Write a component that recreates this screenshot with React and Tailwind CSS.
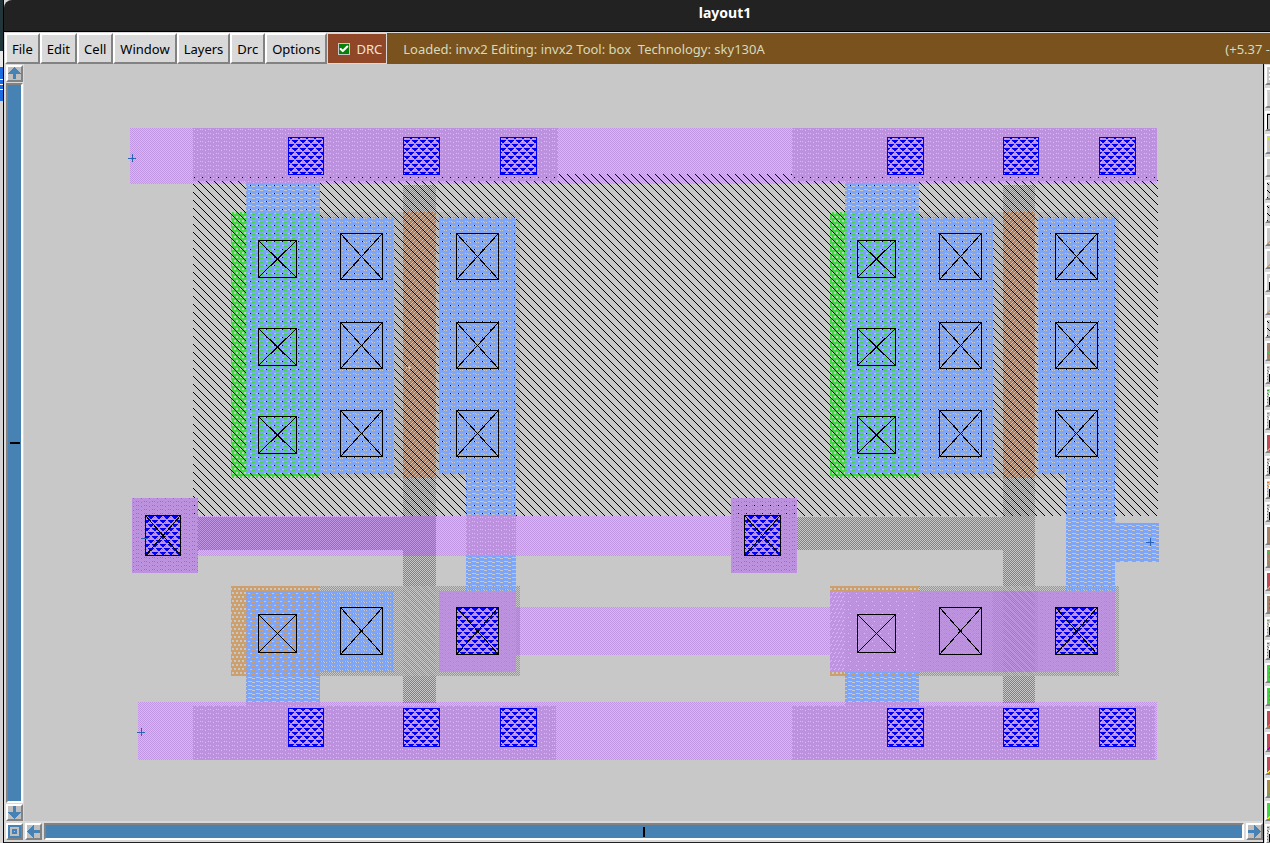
import React from "react";
import { Check } from "lucide-react";

const STIPPLES = [
  { id: "nwell", color: "#000000", rows: [".#......", "..#.....", "...#....", "....#...", ".....#..", "......#.", ".......#", "#......."] },
  { id: "poly", color: "#dc5a5a", rows: [".#", "#."] },
  { id: "ndiff", color: "#42d242", rows: [".#", "#."] },
  { id: "pdiff", color: "#cd9f6c", rows: [".#", "#."] },
  { id: "ntie", color: "#42d642", rows: ["..##", "..##", "####", "####", "##..", "##..", "####", "####"] },
  { id: "ptie", color: "#cd9f6c", rows: ["..##", "..##", "####", "####", "##..", "##..", "####", "####"] },
  { id: "pfet", color: "#c88a5c", rows: ["#...", "...#", "..#.", ".#.."] },
  { id: "nfetBase", color: "#b4825a", rows: [".#", "#."] },
  { id: "nfet", color: "#55d255", rows: [".#......", "..#.....", "...#....", "....#...", ".....#..", "......#.", ".......#", "#......."] },
  { id: "metal1", color: "#7da5fa", rows: ["########", "....####", "####...#", "########"] },
  { id: "metal2", color: "#c096e2", rows: ["#.", ".#"] },
  { id: "via", color: "#0000f5", rows: ["######..", ".####...", "..##....", "........", "##..####", "#....###", "......##", "........"] },
];

// Mask layers in drawing order: [stipple, x1, y1, x2, y2]
const SHAPES = [
  ["poly", 403, 185, 436, 703],
  ["poly", 198, 517, 403, 550],
  ["poly", 132, 498, 198, 573],
  ["poly", 1003, 185, 1035, 703],
  ["poly", 797, 517, 1003, 550],
  ["poly", 731, 498, 797, 573],
  ["ntie", 231, 212, 320, 478],
  ["pdiff", 320, 212, 520, 478],
  ["poly", 403, 212, 436, 478],
  ["pfet", 403, 212, 436, 478],
  ["ntie", 830, 212, 919, 478],
  ["pdiff", 919, 212, 1119, 478],
  ["poly", 1003, 212, 1035, 478],
  ["pfet", 1003, 212, 1035, 478],
  ["ptie", 231, 586, 320, 676],
  ["ndiff", 320, 586, 520, 676],
  ["nfetBase", 403, 586, 436, 676],
  ["nfet", 403, 586, 436, 676],
  ["ptie", 830, 586, 919, 676],
  ["ndiff", 919, 586, 1119, 676],
  ["nfetBase", 1003, 586, 1035, 676],
  ["nfet", 1003, 586, 1035, 676],
  ["nwell", 193, 174, 1158, 516],
  ["metal1", 193, 128, 558, 181],
  ["metal1", 792, 128, 1157, 181],
  ["metal1", 246, 181, 320, 474],
  ["metal1", 320, 217, 394, 474],
  ["metal1", 439, 217, 516, 474],
  ["metal1", 466, 474, 516, 591],
  ["metal1", 845, 181, 919, 474],
  ["metal1", 919, 217, 993, 474],
  ["metal1", 1038, 217, 1115, 474],
  ["metal1", 1066, 474, 1115, 591],
  ["metal1", 1115, 523, 1159, 562],
  ["metal1", 132, 498, 198, 573],
  ["metal1", 731, 498, 797, 573],
  ["metal1", 246, 591, 320, 706],
  ["metal1", 320, 591, 394, 672],
  ["metal1", 439, 591, 516, 672],
  ["metal1", 845, 591, 919, 706],
  ["metal1", 919, 591, 993, 672],
  ["metal1", 1038, 591, 1115, 672],
  ["metal1", 193, 706, 556, 760],
  ["metal1", 792, 706, 1155, 760],
  ["metal2", 130, 128, 1157, 184],
  ["metal2", 132, 498, 198, 573],
  ["metal2", 198, 516, 731, 556],
  ["metal2", 731, 498, 797, 573],
  ["metal2", 439, 591, 516, 672],
  ["metal2", 516, 607, 830, 655],
  ["metal2", 830, 591, 1115, 672],
  ["metal2", 138, 702, 1157, 760],
];

const RAIL_VIAS = [[288, 36], [403, 37], [500, 37], [887, 37], [1003, 36], [1099, 37]].flatMap(([x, w]) => [
  [x, 137, w, 37],
  [x, 708, w, 38],
]);

const SMALL_CUTS = [258, 857].flatMap((x) => [240, 328, 416, 614].map((y) => [x, y, 38, y === 614 ? 38 : 37]));
const TALL_CUTS = [340, 456, 939, 1055].flatMap((x) => [233, 322, 410].map((y) => [x, y, 42, 46]));
const CUTS = [...SMALL_CUTS, ...TALL_CUTS, [340, 607, 42, 47], [939, 607, 42, 47]];
const VIA_CUTS = [
  [456, 607, 42, 47],
  [1055, 607, 42, 47],
  [145, 515, 35, 40],
  [744, 515, 36, 40],
];

function Stipple({ id, color, rows }) {
  const w = rows[0].length;
  const cells = [];
  rows.forEach((row, y) => {
    for (let x = 0; x < w; x++) {
      if (row[x] === "#") cells.push(<rect key={`${x}-${y}`} x={x} y={y} width="1" height="1" />);
    }
  });
  return (
    <pattern id={id} width={w} height={rows.length} patternUnits="userSpaceOnUse" fill={color}>
      {cells}
    </pattern>
  );
}

function Cut({ box: [x, y, w, h] }) {
  return (
    <path
      d={`M${x + 0.5} ${y + 0.5}h${w}v${h}h${-w}zl${w} ${h}M${x + w + 0.5} ${y + 0.5}l${-w} ${h}`}
      fill="none"
      stroke="#000"
    />
  );
}

function Plus({ x, y, color = "#2a62b4" }) {
  return <path d={`M${x - 4} ${y + 0.5}h8M${x + 0.5} ${y - 4}v8`} stroke={color} />;
}

function LayoutCanvas() {
  return (
    <svg className="block h-full w-full" shapeRendering="crispEdges" role="img" aria-label="invx2">
      <defs>
        {STIPPLES.map((s) => (
          <Stipple key={s.id} {...s} />
        ))}
      </defs>
      <g transform="translate(-24 -64)">
        {SHAPES.map(([id, x1, y1, x2, y2], i) => (
          <rect key={i} x={x1} y={y1} width={x2 - x1} height={y2 - y1} fill={`url(#${id})`} />
        ))}
        {RAIL_VIAS.map(([x, y, w, h]) => (
          <rect key={`${x}-${y}`} x={x + 0.5} y={y + 0.5} width={w - 1} height={h} fill="url(#via)" stroke="#0000f5" />
        ))}
        {VIA_CUTS.map(([x, y, w, h]) => (
          <rect key={`${x}-${y}`} x={x} y={y} width={w} height={h} fill="url(#via)" />
        ))}
        {[...CUTS, ...VIA_CUTS].map((box) => (
          <Cut key={box.join("-")} box={box} />
        ))}
        <Plus x={132} y={158} />
        <Plus x={141} y={732} />
        <Plus x={1150} y={542} />
        <path d="M141 538.5h7" stroke="#2a62b4" />
        <path d="M409 365.5v5M406 367.5h6" stroke="#d8b8a0" />
      </g>
    </svg>
  );
}

const MENUS = ["File", "Edit", "Cell", "Window", "Layers", "Drc", "Options"];

function MenuBar() {
  return (
    <header className="flex h-8 shrink-0 items-stretch border-t border-[#d9d9d9] bg-[#7a521e] text-[13px]">
      <nav className="flex bg-[#d9d9d9] pl-px text-black">
        {MENUS.map((m) => (
          <button
            key={m}
            className="border-2 border-t-white border-l-white border-r-[#828282] border-b-[#828282] bg-[#d9d9d9] px-[5px] pt-0.5 leading-none whitespace-nowrap"
          >
            {m}
          </button>
        ))}
      </nav>
      <label className="flex items-center gap-1.5 border border-[#d9d9d9] bg-[#8f4728] pr-1 pl-2.5 text-[#f3e3d8]">
        <span className="relative flex size-3 items-center justify-center">
          <input
            type="checkbox"
            defaultChecked
            className="size-3 appearance-none border border-[#c8c8c8] bg-[#078007]"
          />
          <Check className="pointer-events-none absolute size-2.5 text-white" strokeWidth={5} />
        </span>
        <span className="pt-0.5">DRC</span>
      </label>
      <div className="flex min-w-0 flex-1 items-center justify-between overflow-hidden pt-0.5 pl-4 whitespace-pre text-[#d6dabc]">
        <span>Loaded: invx2 Editing: invx2 Tool: box  Technology: sky130A</span>
        <span className="shrink-0">(+5.37 -</span>
      </div>
    </header>
  );
}

const ARROWS = {
  up: "M6.5 0L13 6v1H8v5H5V7H0V6z",
  down: "M6.5 13L0 7V6h5V0h3v6h5v1z",
  left: "M0 6.5L6 0h1v5h6v3H7v5H6z",
  right: "M13 6.5L7 0H6v5H0v3h6v5h1z",
};

function ScrollButton({ dir, label }) {
  return (
    <button
      aria-label={label}
      className="flex size-[17px] shrink-0 items-center justify-center border-2 border-t-white border-l-white border-r-[#828282] border-b-[#828282] bg-[#bfbfbf]"
    >
      <svg width="13" height="13" viewBox="0 0 13 13" className="shrink-0" shapeRendering="crispEdges">
        {dir === "zoom" ? (
          <path d="M1 1h11v11h-11zM5 5h3v3h-3z" fill="none" stroke="#4682b4" strokeWidth="2" />
        ) : (
          <path d={ARROWS[dir]} fill="#4682b4" />
        )}
      </svg>
    </button>
  );
}

function Thumb({ vertical }) {
  return (
    <div className="flex min-h-0 min-w-0 flex-1 items-center justify-center border-2 border-t-[#828282] border-l-[#828282] border-r-white border-b-white bg-[#4682b4]">
      <div className={vertical ? "h-0.5 w-2.5 bg-black" : "h-2.5 w-0.5 bg-black"} />
    </div>
  );
}

const SWATCHES = [
  ["#c8c8c8", "#ffffff", "dots"], ["#c8c8c8", "#f0f000", "box"], ["#c8c8c8", "#000000", "box"],
  ["#c8c8c8", "#e6e600", "hatch"], ["#c8c8c8", "#c8c8c8", "none"], ["#c8c8c8", "#000000", "hatch"],
  ["#c8c8c8", "#000000", "hatch"], ["#c8c8c8", "#cd9f6c", "slash"], ["#c8c8c8", "#cd9f6c", "slash"],
  ["#c8c8c8", "#e6e600", "cut"], ["#c8c8c8", "#cd9f6c", "slash"], ["#c8c8c8", "#000000", "hatch"],
  ["#a5826a", "#42d242", "hatch"], ["#c8c8c8", "#42a242", "cut"], ["#c8c8c8", "#42a242", "cut"],
  ["#c8c8c8", "#829a62", "cut"], ["#be4b55", "#d8a080", "slash"], ["#c8c8c8", "#be4b55", "cut"],
  ["#c8c8c8", "#d08030", "cut"], ["#c8c8c8", "#be4b55", "cut"], ["#a5826a", "#a5826a", "none"],
  ["#a5826a", "#42d242", "hatch"], ["#be4b55", "#d8a080", "slash"], ["#a5826a", "#be4b55", "dots"],
  ["#c8c8c8", "#829a62", "cut"], ["#c8c8c8", "#be4b55", "cut"], ["#42d642", "#dc5a5a", "dots"],
  ["#42d642", "#dc5a5a", "dots"], ["#be4b55", "#d08030", "slash"], ["#be4b55", "#b400a0", "slash"],
  ["#be4b55", "#f5f500", "slash"], ["#a58c46", "#6aa050", "slash"], ["#42d642", "#f5f500", "slash"],
  ["#c8c8c8", "#c83c78", "cut"],
];

const MARKS = {
  dots: "M2 3h2v2h-2zM2 7h2v2h-2zM2 11h2v2h-2z",
  box: "M0 1h4v1h-3v14h-1z",
  hatch: "M0 1h1v1h1v1h-1v-1h-1zM0 8h1v1h1v1h2v1h-2v-1h-1v-1h-1zM0 15h1v1h-1z",
  slash: "M0 7h1v-1h1v-1h2v-1h-1v1h-1v1h-1v1h-1zM0 15h1v-1h1v-1h1v-1h1v2h-1v1h-1v1h-2z",
  cut: "M0 1h2v1h-2zM0 4h1v1h-1zM1 5h1v1h-1zM0 7h1v1h-1zM0 10h1v1h-1zM0 13h1v1h-1z",
};

function Palette() {
  return (
    <aside className="flex w-1.5 shrink-0 flex-col gap-[3px] overflow-hidden bg-[#d9d9d9] pt-px pl-px">
      {SWATCHES.map(([bg, fg, kind], i) => (
        <div key={i} className="h-5 w-6 shrink-0 border-2 border-t-white border-l-white border-r-[#828282] border-b-[#828282] bg-[#d9d9d9]">
          <svg width="20" height="16" className="block" shapeRendering="crispEdges">
            <rect width="20" height="16" fill={bg} />
            {MARKS[kind] && <path d={MARKS[kind]} fill={fg} />}
            {kind === "cut" && <path d="M2 4h2v12h-2z" fill="#fff" />}
            {kind === "cut" && <path d="M2 8h3v8h-3z" fill="#000" />}
          </svg>
        </div>
      ))}
    </aside>
  );
}

export default function App() {
  return (
    <div className="flex h-screen w-full overflow-hidden bg-[#d9d9d9] font-['Noto_Sans',sans-serif]">
      <div className="flex w-[3px] shrink-0 flex-col">
        <div className="h-[51px] bg-[#20363b]" />
        <div className="h-4 bg-[#e8e8e8]" />
        <div className="flex h-[34px] flex-col justify-center gap-1 bg-[#1c6be0]">
          <div className="h-px bg-white" />
          <div className="h-px bg-white" />
          <div className="h-px bg-white" />
        </div>
        <div className="flex-1 bg-[#d4d4d4]" />
      </div>
      <div className="flex min-w-0 flex-1 flex-col border-l border-black">
        <div className="flex h-8 shrink-0 items-center justify-center rounded-tl-lg border-b border-black bg-[#222222] pl-44 text-[14px] font-bold text-white">
          <h1 className="-mt-1.5">layout1</h1>
        </div>
        <MenuBar />
        <main className="flex min-h-0 flex-1">
          <div className="flex min-w-0 flex-1 flex-col border-r border-black">
            <div className="flex min-h-0 flex-1">
              <div className="flex w-5 shrink-0 flex-col items-stretch gap-px bg-[#d9d9d9] pt-px pr-px pl-0.5">
                <ScrollButton dir="up" label="Scroll up" />
                <Thumb vertical />
                <ScrollButton dir="down" label="Scroll down" />
              </div>
              <div className="min-w-0 flex-1 bg-[#c8c8c8]">
                <LayoutCanvas />
              </div>
            </div>
            <div className="flex h-[22px] shrink-0 items-stretch gap-0.5 border-b border-[#222222] bg-[#d9d9d9] pt-0.5 pb-0.5 pl-0.5">
              <ScrollButton dir="zoom" label="View all" />
              <ScrollButton dir="left" label="Scroll left" />
              <Thumb />
              <ScrollButton dir="right" label="Scroll right" />
            </div>
          </div>
          <Palette />
        </main>
      </div>
    </div>
  );
}
